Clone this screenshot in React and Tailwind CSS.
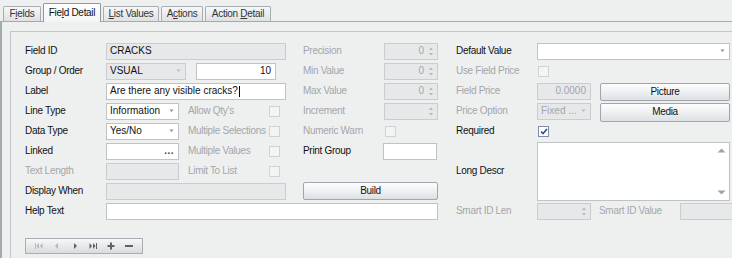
import React from "react";

const font = "font-['Liberation_Sans',Arial,sans-serif] text-[10px] leading-none whitespace-nowrap";
const lbl = "tracking-[-0.3px]";

const Tab = ({ children, active, w }) =>
  active ? (
    <div
      className={`relative z-10 -mb-px flex h-[19px] ${w} items-center justify-center rounded-t-[2px] border border-b-0 border-[#8f969e] bg-gradient-to-b from-white to-[#f2f3f4] text-[#111] ${lbl}`}
    >
      <span>{children}</span>
    </div>
  ) : (
    <div
      className={`flex h-[15px] ${w} items-center justify-center rounded-t-[2px] border border-b-0 border-[#a7adb4] bg-gradient-to-b from-[#f7f7f7] to-[#dfe1e3] text-[#333] ${lbl}`}
    >
      <span>{children}</span>
    </div>
  );

const Label = ({ children, dim, w = "w-[81px]" }) => (
  <div className={`${w} shrink-0 ${lbl} ${dim ? "text-[#a3a6aa]" : "text-[#111]"}`}>{children}</div>
);

const Input = ({ w, dim, right, children, className = "" }) => (
  <div
    className={`flex h-[17px] ${w} shrink-0 items-center border px-[3px] ${
      dim ? "border-[#c9ccd0] bg-[#e7e8ea] text-[#a3a6aa]" : "border-[#bfc3c8] bg-white text-[#111]"
    } ${right ? "justify-end" : ""} ${className}`}
  >
    {children}
  </div>
);

const Arrow = ({ dim }) => (
  <svg width="7" height="4" viewBox="0 0 7 4" className="ml-auto mr-[3px] shrink-0">
    <path d="M1.5 0.5h4L3.5 3z" fill={dim ? "#b9bcc0" : "#8a8e93"} />
  </svg>
);

const Combo = ({ w, dim, children }) => (
  <Input w={w} dim={dim} className="pr-0">
    <span className={dim ? "text-[#111]" : ""}>{children}</span>
    <Arrow dim={dim} />
  </Input>
);

const Spin = ({ w = "w-[54px]", value }) => (
  <div className={`flex h-[17px] ${w} shrink-0 items-center justify-end border border-[#c9ccd0] bg-[#e7e8ea] text-[#a3a6aa]`}>
    <span className="mr-[4px]">{value}</span>
    <svg width="6" height="11" viewBox="0 0 6 11" className="mr-[3px]">
      <path d="M1 4L3 1.5 5 4z" fill="#b4b7bb" />
      <path d="M1 7L3 9.5 5 7z" fill="#b4b7bb" />
    </svg>
  </div>
);

const Check = ({ checked, className = "" }) => (
  <div
    className={`flex h-[11px] w-[11px] shrink-0 items-center justify-center border ${
      checked ? "border-[#7f8ea6] bg-white" : "border-[#cfd2d6] bg-[#f4f4f5]"
    } ${className}`}
  >
    {checked && (
      <svg width="8" height="7" viewBox="0 0 8 7">
        <path d="M1 3.5l2 2L7 1" stroke="#334e8c" strokeWidth="1.6" fill="none" />
      </svg>
    )}
  </div>
);

const Button = ({ w, h = "h-[18px]", children }) => (
  <div
    className={`flex ${h} ${w} shrink-0 items-center justify-center rounded-[2px] border border-[#9fa6ae] bg-gradient-to-b from-[#fdfdfd] via-[#eef0f2] to-[#dde0e4] text-[#111] ${lbl}`}
  >
    {children}
  </div>
);

const Row = ({ children }) => <div className="flex h-5 items-center">{children}</div>;

const Left = ({ children }) => <div className="flex w-[261px] shrink-0 items-center">{children}</div>;
const Mid = ({ children }) => <div className="ml-[17px] flex w-[134px] shrink-0 items-center">{children}</div>;

const NavIcon = ({ d, dim }) => (
  <svg width="10" height="8" viewBox="0 0 10 8">
    <path d={d} fill={dim ? "#b3b7bc" : "#5d6269"} />
  </svg>
);

export default function App() {
  return (
    <div className={`h-[258px] w-[732px] overflow-hidden bg-[#eef0f0] ${font}`}>
      {/* tabs */}
      <div className="flex h-[21px] items-end gap-[2px] pl-[3px]">
        <Tab w="w-[38px]">
          F<u>i</u>elds
        </Tab>
        <Tab w="w-[58px]" active>
          Fie<u>l</u>d Detail
        </Tab>
        <Tab w="w-[56px]">
          <u>L</u>ist Values
        </Tab>
        <Tab w="w-[42px]">
          A<u>c</u>tions
        </Tab>
        <Tab w="w-[66px]">
          Action <u>D</u>etail
        </Tab>
      </div>

      {/* page */}
      <div className="h-[237px] border-l-2 border-t border-[#a3a9b0] pl-[8px] pt-[9px]">
        <div className="h-full border-l border-t border-[#c3c7cb] pl-[14px] pt-[9px]">
          <div className="flex">
            {/* left + middle */}
            <div className="flex flex-col">
              <Row>
                <Left>
                  <Label>Field ID</Label>
                  <Input w="w-[180px]" dim>
                    <span className="text-[#111]">CRACKS</span>
                  </Input>
                </Left>
                <Mid>
                  <Label dim>Precision</Label>
                  <Spin value="0" />
                </Mid>
              </Row>
              <Row>
                <Left>
                  <Label>Group / Order</Label>
                  <Combo w="w-[80px]" dim>
                    VSUAL
                  </Combo>
                  <Input w="w-[80px]" right className="ml-[10px] pr-[4px]">
                    10
                  </Input>
                </Left>
                <Mid>
                  <Label dim>Min Value</Label>
                  <Spin value="0" />
                </Mid>
              </Row>
              <Row>
                <Left>
                  <Label>Label</Label>
                  <Input w="w-[180px]">
                    Are there any visible cracks?
                    <span className="ml-px inline-block h-[11px] w-px bg-black" />
                  </Input>
                </Left>
                <Mid>
                  <Label dim>Max Value</Label>
                  <Spin value="0" />
                </Mid>
              </Row>
              <Row>
                <Left>
                  <Label>Line Type</Label>
                  <Combo w="w-[73px]">Information</Combo>
                  <Label dim w="w-[81px] ml-[9px]">
                    Allow Qty's
                  </Label>
                  <Check />
                </Left>
                <Mid>
                  <Label dim>Increment</Label>
                  <Spin value="" />
                </Mid>
              </Row>
              <Row>
                <Left>
                  <Label>Data Type</Label>
                  <Combo w="w-[73px]">Yes/No</Combo>
                  <Label dim w="w-[81px] ml-[9px]">
                    Multiple Selections
                  </Label>
                  <Check />
                </Left>
                <Mid>
                  <Label dim>Numeric Warn</Label>
                  <Check className="ml-[1px]" />
                </Mid>
              </Row>
              <Row>
                <Left>
                  <Label>Linked</Label>
                  <Input w="w-[73px]" right className="pr-[4px] text-[#444]">
                    <span className="font-bold tracking-[0.5px]">...</span>
                  </Input>
                  <Label dim w="w-[81px] ml-[9px]">
                    Multiple Values
                  </Label>
                  <Check />
                </Left>
                <Mid>
                  <Label>Print Group</Label>
                  <Input w="w-[54px]" className="-ml-px" />
                </Mid>
              </Row>
              <Row>
                <Left>
                  <Label dim>Text Length</Label>
                  <Input w="w-[73px]" dim />
                  <Label dim w="w-[81px] ml-[9px]">
                    Limit To List
                  </Label>
                  <Check />
                </Left>
                <Mid />
              </Row>
              <Row>
                <Left>
                  <Label>Display When</Label>
                  <Input w="w-[180px]" dim />
                </Left>
                <Mid>
                  <Button w="w-[135px]">Build</Button>
                </Mid>
              </Row>
              <Row>
                <Label>Help Text</Label>
                <Input w="w-[332px]" />
              </Row>
            </div>

            {/* right */}
            <div className="ml-[18px] flex flex-col">
              <Row>
                <Label>Default Value</Label>
                <Combo w="w-[193px]" />
              </Row>
              <Row>
                <Label dim>Use Field Price</Label>
                <Check className="ml-[1px]" />
              </Row>
              <Row>
                <Label dim>Field Price</Label>
                <Input w="w-[54px]" dim right className="pr-[4px]">
                  0.0000
                </Input>
                <div className="ml-[9px] mt-[1px]">
                  <Button w="w-[130px]">Picture</Button>
                </div>
              </Row>
              <Row>
                <Label dim>Price Option</Label>
                <Input w="w-[54px]" dim className="pr-0">
                  Fixed ...
                  <Arrow dim />
                </Input>
                <div className="ml-[9px] mt-[2px]">
                  <Button w="w-[130px]" h="h-[19px]">
                    Media
                  </Button>
                </div>
              </Row>
              <Row>
                <Label>Required</Label>
                <Check checked className="ml-[1px]" />
              </Row>
              <div className="flex h-[60px] items-center">
                <Label>Long Descr</Label>
                <div className="mt-px flex h-[59px] w-[193px] border border-[#bfc3c8] bg-white">
                  <div className="flex-1" />
                  <div className="flex w-[15px] flex-col items-center justify-between py-[5px]">
                    <svg width="9" height="5" viewBox="0 0 9 5">
                      <path d="M0.5 4.5L4.5 0.5 8.5 4.5z" fill="#9ea3a9" />
                    </svg>
                    <svg width="9" height="5" viewBox="0 0 9 5">
                      <path d="M0.5 0.5L4.5 4.5 8.5 0.5z" fill="#9ea3a9" />
                    </svg>
                  </div>
                </div>
              </div>
              <Row>
                <Label dim>Smart ID Len</Label>
                <Spin w="w-[54px]" value="" />
                <Label dim w="w-[81px] ml-[8px]">
                  Smart ID Value
                </Label>
                <Input w="w-[60px]" dim />
              </Row>
            </div>
          </div>

          {/* navigator */}
          <div className="mt-[17px] flex h-[16px] w-[118px] items-center justify-around border border-[#a9aeb4] bg-gradient-to-b from-[#f6f7f8] to-[#d9dcdf] px-[4px]">
            <NavIcon dim d="M1 1h1v6H1zM5 1v6L2.5 4zM8.5 1v6L6 4z" />
            <NavIcon dim d="M6 1v6L3 4z" />
            <NavIcon d="M4 1v6l3-3z" />
            <NavIcon d="M1.5 1v6L4 4zM5 1v6l2.5-3zM8 1h1v6H8z" />
            <NavIcon d="M4 0.5h2v2.5h2.5v2H6v2.5H4V5H1.5V3H4z" />
            <NavIcon d="M1 3h8v2H1z" />
          </div>
        </div>
      </div>
    </div>
  );
}
